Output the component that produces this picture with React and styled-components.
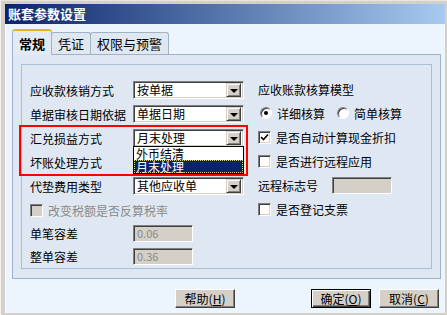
import React from "react";
import styled, { createGlobalStyle, css } from "styled-components";

const GlobalStyle = createGlobalStyle`
  html, body {
    margin: 0;
    padding: 0;
    background: #d4d0c8;
  }
  body {
    font-family: "Noto Sans CJK SC", "DejaVu Sans", sans-serif;
    font-size: 12px;
    color: #000;
  }
`;

const sunken = css`
  border: 1px solid;
  border-color: #808080 #ffffff #ffffff #808080;
  box-shadow: inset 1px 1px #404040, inset -1px -1px #d4d0c8;
`;

const raised = css`
  border: 1px solid;
  border-color: #ffffff #404040 #404040 #ffffff;
  box-shadow: inset -1px -1px #808080;
`;

const Window = styled.div`
  width: 447px;
  height: 315px;
  box-sizing: border-box;
  padding: 3px 2px 2px 4px;
  background: #d4d0c8;
  border-top: 1px solid #e8e6e0;
  border-left: 1px solid #f4f3ef;
  display: flex;
  flex-direction: column;
`;

const TitleBar = styled.div`
  height: 20px;
  flex-shrink: 0;
  padding-left: 3px;
  line-height: 20px;
  color: #ffffff;
  font-weight: bold;
  font-size: 13px;
  background: linear-gradient(to right, #0a246a, #a6caf0);
`;

const Body = styled.div`
  flex: 1;
  background: #ecf5fe;
  padding: 5px 6px 0 6px;
  border-left: 1px solid #ffffff;
  display: flex;
  flex-direction: column;
`;

const TabStrip = styled.div`
  display: flex;
  align-items: flex-end;
  height: 25px;
`;

const Tab = styled.div`
  box-sizing: border-box;
  padding: 0 6px;
  font-size: 13px;
  border: 1px solid #9fb2c6;
  border-bottom: none;
  border-radius: 3px 3px 0 0;
  display: flex;
  align-items: center;
  ${(p) =>
    p.active
      ? css`
          height: 26px;
          margin-bottom: -1px;
          position: relative;
          z-index: 1;
          background: #e2ebf4;
          border-top: 2px solid #e0b428;
          font-weight: bold;
          padding: 0 6px;
        `
      : css`
          height: 22px;
          background: #dfe8f1;
          margin-left: -1px;
          &:first-child { margin-left: 0; }
        `}
`;

const Panel = styled.div`
  width: 429px;
  height: 225px;
  box-sizing: border-box;
  border: 1px solid #9fb2c6;
  background: #dfe8f2;
  padding: 9px 8px;
  display: flex;
`;

const Group = styled.div`
  flex: 1;
  position: relative;
  border: 1px solid #a8bfd8;
  padding: 13px 0 0 8px;
  display: grid;
  grid-template-columns: 214px 1fr;
  column-gap: 14px;
  align-content: start;
`;

const Column = styled.div`
  display: flex;
  flex-direction: column;
  margin-top: ${(p) => p.shift || 0}px;
`;

const Row = styled.div`
  display: flex;
  align-items: center;
  height: ${(p) => p.h || 24}px;
  white-space: nowrap;
  color: ${(p) => (p.disabled ? "#8a8a8a" : "#000")};
`;

const Label = styled.span`
  width: ${(p) => p.w || 103}px;
  flex-shrink: 0;
`;

const SelectBox = styled.div`
  position: relative;
  width: 111px;
  height: 18px;
  box-sizing: border-box;
  ${sunken};
  background: #ffffff;
  display: flex;
  align-items: center;
  padding: 0 2px 0 3px;
`;

const SelectText = styled.span`
  flex: 1;
  line-height: 14px;
`;

const ArrowBtn = styled.span`
  width: 15px;
  height: 14px;
  box-sizing: border-box;
  background: #d4d0c8;
  border: 1px solid;
  border-color: #d4d0c8 #404040 #404040 #d4d0c8;
  box-shadow: inset 1px 1px #ffffff, inset -1px -1px #808080;
  display: flex;
  align-items: center;
  justify-content: center;
  &::after {
    content: "";
    border-left: 4px solid transparent;
    border-right: 4px solid transparent;
    border-top: 4px solid #000;
    margin-top: 1px;
  }
`;

const DropList = styled.div`
  position: absolute;
  left: -1px;
  top: 100%;
  width: 111px;
  box-sizing: border-box;
  border: 1px solid #000;
  background: #ffffff;
  z-index: 3;
`;

const DropItem = styled.div`
  height: 13px;
  line-height: 13px;
  padding-left: 2px;
  box-sizing: border-box;
  ${(p) =>
    p.selected &&
    css`
      background: #0a246a;
      color: #ffffff;
      outline: 1px dotted #d8d090;
      outline-offset: -1px;
    `}
`;

const TextInput = styled.div`
  width: ${(p) => p.w || 60}px;
  height: 17px;
  box-sizing: border-box;
  ${sunken};
  background: #d4d0c8;
  color: #8a8a8a;
  padding-left: 3px;
  line-height: 15px;
  font-size: 11px;
`;

const CheckBox = styled.span`
  width: 13px;
  height: 13px;
  box-sizing: border-box;
  ${sunken};
  background: ${(p) => (p.disabled ? "#d4d0c8" : "#ffffff")};
  margin-right: 5px;
  display: inline-flex;
  align-items: center;
  justify-content: center;
  flex-shrink: 0;
`;

const Radio = styled.span`
  width: 12px;
  height: 12px;
  box-sizing: border-box;
  border-radius: 50%;
  border: 1px solid;
  border-color: #808080 #ffffff #ffffff #808080;
  box-shadow: inset 1px 1px #404040;
  background: #ffffff;
  margin: 0 5px 0 2px;
  display: inline-flex;
  align-items: center;
  justify-content: center;
  flex-shrink: 0;
  &::after {
    content: "";
    display: ${(p) => (p.checked ? "block" : "none")};
    width: 4px;
    height: 4px;
    border-radius: 50%;
    background: #000;
  }
`;

const RadioLabel = styled.span`
  margin-right: 10px;
`;

const Highlight = styled.div`
  position: absolute;
  left: -3px;
  top: 60px;
  width: 229px;
  height: 51px;
  box-sizing: border-box;
  border: 2px solid #ff0000;
  pointer-events: none;
  z-index: 2;
`;

const ButtonBar = styled.div`
  display: flex;
  justify-content: flex-end;
  gap: 8px;
  margin-top: 10px;
`;

const Button = styled.div`
  width: 60px;
  height: 19px;
  box-sizing: border-box;
  background: #d4d0c8;
  ${raised};
  display: flex;
  align-items: center;
  justify-content: center;
  font-size: 12px;
  margin-right: ${(p) => p.gapRight || 0}px;
  ${(p) =>
    p.primary &&
    css`
      border: 1px solid #000;
      box-shadow: inset 1px 1px #ffffff, inset -1px -1px #404040,
        inset -2px -2px #808080;
    `}
`;

const Check = () => (
  <svg width="9" height="9" viewBox="0 0 9 9">
    <path d="M1 4 L3.5 6.5 L8 1.5" stroke="#000" strokeWidth="1.6" fill="none" />
  </svg>
);

const Select = ({ value, children }) => (
  <SelectBox>
    <SelectText>{value}</SelectText>
    <ArrowBtn />
    {children}
  </SelectBox>
);

export default function App() {
  return (
    <>
      <GlobalStyle />
      <Window>
        <TitleBar>账套参数设置</TitleBar>
        <Body>
          <TabStrip>
            <Tab active>常规</Tab>
            <Tab>凭证</Tab>
            <Tab>权限与预警</Tab>
          </TabStrip>
          <Panel>
            <Group>
              <Highlight />
              <Column>
                <Row>
                  <Label>应收款核销方式</Label>
                  <Select value="按单据" />
                </Row>
                <Row>
                  <Label>单据审核日期依据</Label>
                  <Select value="单据日期" />
                </Row>
                <Row>
                  <Label>汇兑损益方式</Label>
                  <Select value="月末处理">
                    <DropList>
                      <DropItem>外币结清</DropItem>
                      <DropItem selected>月末处理</DropItem>
                    </DropList>
                  </Select>
                </Row>
                <Row>
                  <Label>坏账处理方式</Label>
                </Row>
                <Row>
                  <Label>代垫费用类型</Label>
                  <Select value="其他应收单" />
                </Row>
                <Row disabled>
                  <CheckBox disabled />
                  改变税额是否反算税率
                </Row>
                <Row h={23}>
                  <Label>单笔容差</Label>
                  <TextInput>0.06</TextInput>
                </Row>
                <Row h={22}>
                  <Label>整单容差</Label>
                  <TextInput>0.36</TextInput>
                </Row>
              </Column>
              <Column shift={-1}>
                <Row>应收账款核算模型</Row>
                <Row>
                  <Radio checked />
                  <RadioLabel>详细核算</RadioLabel>
                  <Radio />
                  <RadioLabel>简单核算</RadioLabel>
                </Row>
                <Row>
                  <CheckBox>
                    <Check />
                  </CheckBox>
                  是否自动计算现金折扣
                </Row>
                <Row>
                  <CheckBox />
                  是否进行远程应用
                </Row>
                <Row>
                  <Label w={74}>远程标志号</Label>
                  <TextInput w={60} />
                </Row>
                <Row>
                  <CheckBox />
                  是否登记支票
                </Row>
              </Column>
            </Group>
          </Panel>
          <ButtonBar>
            <Button gapRight={68}>
              帮助(<u>H</u>)
            </Button>
            <Button primary>
              确定(<u>O</u>)
            </Button>
            <Button>
              取消(<u>C</u>)
            </Button>
          </ButtonBar>
        </Body>
      </Window>
    </>
  );
}
